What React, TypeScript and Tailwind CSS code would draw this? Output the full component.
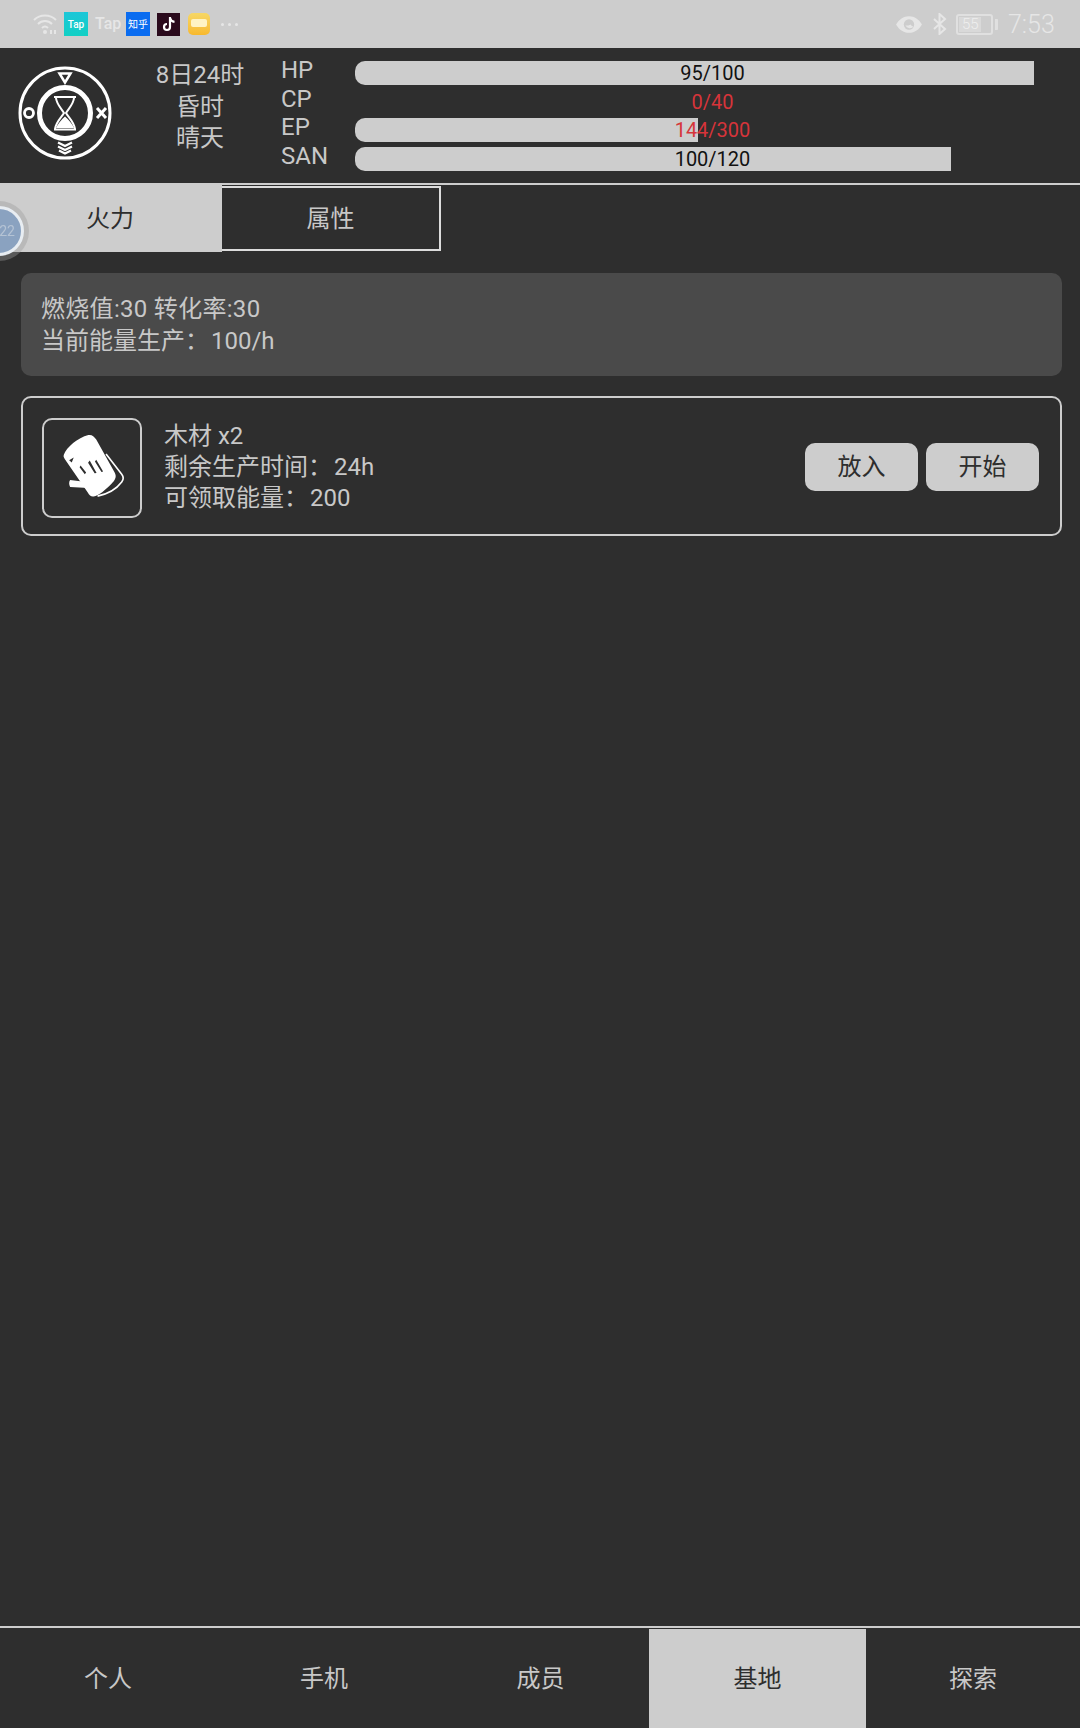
import React from "react";

const font = { fontFamily: '"Roboto", "Noto Sans CJK SC", sans-serif' };

function Logo() {
  return (
    <svg width="96" height="96" viewBox="0 0 96 96" fill="none" className="shrink-0 -mt-[6px]">
      <circle cx="48" cy="48" r="45" stroke="#fff" strokeWidth="3" />
      <circle cx="48" cy="48" r="25.500" stroke="#fff" strokeWidth="5" />
      <path d="M42.500 8.500h11L48 17.500z" stroke="#fff" strokeWidth="2.500" />
      <circle cx="12" cy="48" r="4.500" stroke="#fff" strokeWidth="2.800" />
      <path d="M80 43l9 10M89 43l-9 10" stroke="#fff" strokeWidth="3" />
      <path d="M41 77.500l7 3.500 7-3.500M41 81.500l7 3.500 7-3.500M42 85.500l6 3 6-3" stroke="#fff" strokeWidth="2.200" />
      <path d="M37 32h22M37 64.500h22" stroke="#fff" strokeWidth="2" />
      <path d="M39 33c.5 6 5 10 8 15-3 5-8 9-9 16M57 33c-.5 6-5 10-8 15 3 5 8 9 9 16" stroke="#fff" strokeWidth="2" />
      <path d="M39 63c1.500-4 5.500-8.500 9-11.500 3.500 3 7.500 7.500 9 11.500z" fill="#fff" />
    </svg>
  );
}

function WoodIcon() {
  return (
    <svg width="96" height="96" viewBox="36 24 294 294" fill="none" className="shrink-0">
      <path d="M97 130c8-22 42-52 75-60 10-2 17 3 24 14l56 100c8 14 2 24-10 36-18 18-38 36-54 38-8 1-13-3-18-12l-70-102c-4-6-5-9-3-14z" fill="#fff" />
      <path d="M226 128l48 62c7 9 6 16 0 24-12 16-38 36-74 43" stroke="#fff" strokeWidth="5" />
      <path d="M116 208l50 6 6 18-56-3c-4-7-4-15 0-21z" fill="#fff" />
      <path d="M113 147l14-8-6 15zM148 163l17 22-4 5-16-21zM176 148l21 38-6 1-20-32zM196 146l21 36-5 1-20-32z" fill="#2e2e2e" />
    </svg>
  );
}

function StatusBar() {
  return (
    <div className="h-[48px] shrink-0 bg-[#cdcdcd] flex items-center justify-between pl-[33px] pr-[25px] text-[#e3e3e3]">
      <div className="flex items-center">
        <svg width="26" height="24" viewBox="0 0 26 24" fill="none" className="mr-[5px]">
          <path d="M1 8c6-6 16-6 22 0M5 12c4-4 10-4 14 0M9 16c2-2 4-2 6 0" stroke="#e6e6e6" strokeWidth="2" />
          <circle cx="12" cy="20" r="2" fill="#e6e6e6" />
          <path d="M18 18v4M22 22v-4" stroke="#e6e6e6" strokeWidth="2" />
        </svg>
        <div className="w-[24px] h-[24px] bg-gradient-to-b from-[#1cc6d8] to-[#12d0c4] text-white text-[10px] font-medium flex items-center justify-center">Tap</div>
        <div className="w-[24px] ml-[7px] text-[#e6e6e6] text-[16px] font-medium text-center leading-none">Tap</div>
        <div className="w-[24px] h-[24px] ml-[7px] bg-[#0a6cf0] text-white text-[10px] flex items-center justify-center">知乎</div>
        <div className="w-[23px] h-[23px] ml-[7px] bg-[#2a0a1c] flex items-center justify-center">
          <svg width="14" height="16" viewBox="0 0 14 16" fill="none">
            <path d="M8 1v10a3 3 0 1 1-3-3M8 2c.5 2 2 3.500 4.500 3.800" stroke="#fff" strokeWidth="2.200" />
          </svg>
        </div>
        <div className="w-[22px] h-[22px] ml-[8px] rounded-[5px] bg-gradient-to-b from-[#f6d765] to-[#f8b92c] flex items-center justify-center">
          <div className="w-[16px] h-[8px] bg-[#fff3c4] rounded-[2px] -mt-[3px]" />
        </div>
        <div className="flex ml-[11px] gap-[4px]">
          <div className="w-[3px] h-[3px] rounded-full bg-[#e6e6e6]" />
          <div className="w-[3px] h-[3px] rounded-full bg-[#e6e6e6]" />
          <div className="w-[3px] h-[3px] rounded-full bg-[#e6e6e6]" />
        </div>
      </div>
      <div className="flex items-center">
        <svg width="28" height="19" viewBox="0 0 27 18" fill="none">
          <path d="M1 9c3-5 7-8 12.500-8S23 4 26 9c-3 5-7 8-12.500 8S4 14 1 9z" fill="#e6e6e6" />
          <circle cx="13.500" cy="9" r="5" fill="#cdcdcd" />
          <path d="M10 10a5 5 0 0 0 8 1c-1 0-2-.5-3-2-1 1-3 1-5 1z" fill="#e6e6e6" />
        </svg>
        <svg width="15" height="22" viewBox="0 0 15 22" fill="none" className="ml-[9px]">
          <path d="M2 6l11 10-5.500 5V1L13 6 2 16" stroke="#e6e6e6" strokeWidth="2" />
        </svg>
        <div className="ml-[9px] w-[37px] h-[21px] border-2 border-[#e0e0e0] rounded-[3px] flex items-center p-[1px]">
          <div className="w-[22px] h-full bg-[#d9d9d9] text-[15px] font-light leading-none flex items-center pl-[3px] text-[#eeeeee]">55</div>
        </div>
        <div className="ml-[2px] w-[3px] h-[11px] bg-[#e0e0e0] rounded-r-[1px]" />
        <div className="ml-[10px] text-[25px] leading-none font-light w-[47px] text-[#e6e6e6]">7:53</div>
      </div>
    </div>
  );
}

function Bar({ label, value, pct, red }: { label: string; value: string; pct: number; red?: boolean }) {
  return (
    <div className="h-[28.5px] flex items-center">
      <div className="w-[74px] text-[24px] leading-none text-[#c8c8c8] mb-[6px]">{label}</div>
      <div className="relative w-[715px] h-[24px]">
        <div className="absolute left-0 top-0 h-full bg-[#cdcdcd] rounded-l-[10px]" style={{ width: `${pct}%` }} />
        <div className={`absolute inset-0 flex items-center justify-center text-[20px] leading-none ${red ? "text-[#d6343a]" : "text-[#111111]"}`}>
          {value}
        </div>
      </div>
    </div>
  );
}

function Header() {
  return (
    <div className="h-[137px] shrink-0 bg-[#2e2e2e] border-b-2 border-[#cdcdcd] flex items-center pl-[17px]">
      <Logo />
      <div className="w-[140px] ml-[17px] text-center text-[24px] leading-[31.500px] text-[#c8c8c8] -mt-[16px]">
        <div>8日24时</div>
        <div>昏时</div>
        <div>晴天</div>
      </div>
      <div className="ml-[11px] mt-[1px]">
        <Bar label="HP" value="95/100" pct={95} />
        <Bar label="CP" value="0/40" pct={0} red />
        <Bar label="EP" value="144/300" pct={48} red />
        <Bar label="SAN" value="100/120" pct={83.330} />
      </div>
    </div>
  );
}

function Tabs() {
  return (
    <div className="relative h-[67px] shrink-0 flex items-stretch">
      <div className="w-[222px] h-[67px] bg-[#cdcdcd] text-[#2e2e2e] text-[24px] flex items-center justify-center pr-[2px]">火力</div>
      <div className="w-[219px] h-[65px] mt-[1px] border-2 border-[#dcdcdc] border-l-0 text-[#c8c8c8] text-[24px] flex items-center justify-center">属性</div>
      <div className="absolute -left-[31px] top-[16px] w-[60px] h-[60px] rounded-full bg-[#9a9a9a]/40 flex items-center justify-center blur-[0.5px]">
        <div className="w-[50px] h-[50px] rounded-full border-[3px] border-[#e8edf2] bg-[#8aa2c0] flex items-center justify-end pr-[6px] text-[14px] text-[#b5c3d4]">
          22
        </div>
      </div>
    </div>
  );
}

function InfoCard() {
  return (
    <div className="mt-[21px] ml-[21px] mr-[18px] h-[103px] rounded-[10px] bg-[#4a4a4a] px-[20px] flex flex-col justify-center text-[24px] leading-[32px] text-[#c8c8c8]">
      <div className="tracking-[0.3px]">燃烧值:30 转化率:30</div>
      <div>当前能量生产：<span className="pl-[2px]">100/h</span></div>
    </div>
  );
}

function ItemCard() {
  return (
    <div className="mt-[20px] ml-[21px] mr-[18px] h-[140px] rounded-[10px] border-2 border-[#cdcdcd] flex items-center pl-[19px] pr-[21px] pt-[3px]">
      <div className="w-[100px] h-[100px] shrink-0 rounded-[10px] border-2 border-[#cdcdcd] flex items-center justify-center">
        <WoodIcon />
      </div>
      <div className="ml-[22px] flex-1 text-[24px] leading-[31px] text-[#c8c8c8]">
        <div>木材 x2</div>
        <div>剩余生产时间：<span className="pl-[2px]">24h</span></div>
        <div>可领取能量：<span className="pl-[2px]">200</span></div>
      </div>
      <div className="flex gap-[8px] mb-[2px]">
        <div className="w-[113px] h-[48px] rounded-[10px] bg-[#cdcdcd] text-[#2e2e2e] text-[24px] flex items-center justify-center">放入</div>
        <div className="w-[113px] h-[48px] rounded-[10px] bg-[#cdcdcd] text-[#2e2e2e] text-[24px] flex items-center justify-center">开始</div>
      </div>
    </div>
  );
}

function Nav() {
  const items = ["个人", "手机", "成员", "基地", "探索"];
  return (
    <div className="h-[102px] shrink-0 border-t-2 border-[#cdcdcd] pt-[1px] grid grid-cols-[216px_216px_217px_217px_214px]">
      {items.map((t) => (
        <div
          key={t}
          className={`flex items-center justify-center text-[24px] ${t === "基地" ? "bg-[#cdcdcd] text-[#2e2e2e]" : "text-[#c8c8c8]"}`}
        >
          {t}
        </div>
      ))}
    </div>
  );
}

export default function App() {
  return (
    <div className="w-[1080px] h-[1728px] bg-[#2e2e2e] flex flex-col overflow-hidden" style={font}>
      <StatusBar />
      <Header />
      <Tabs />
      <div className="flex-1">
        <InfoCard />
        <ItemCard />
      </div>
      <Nav />
    </div>
  );
}
